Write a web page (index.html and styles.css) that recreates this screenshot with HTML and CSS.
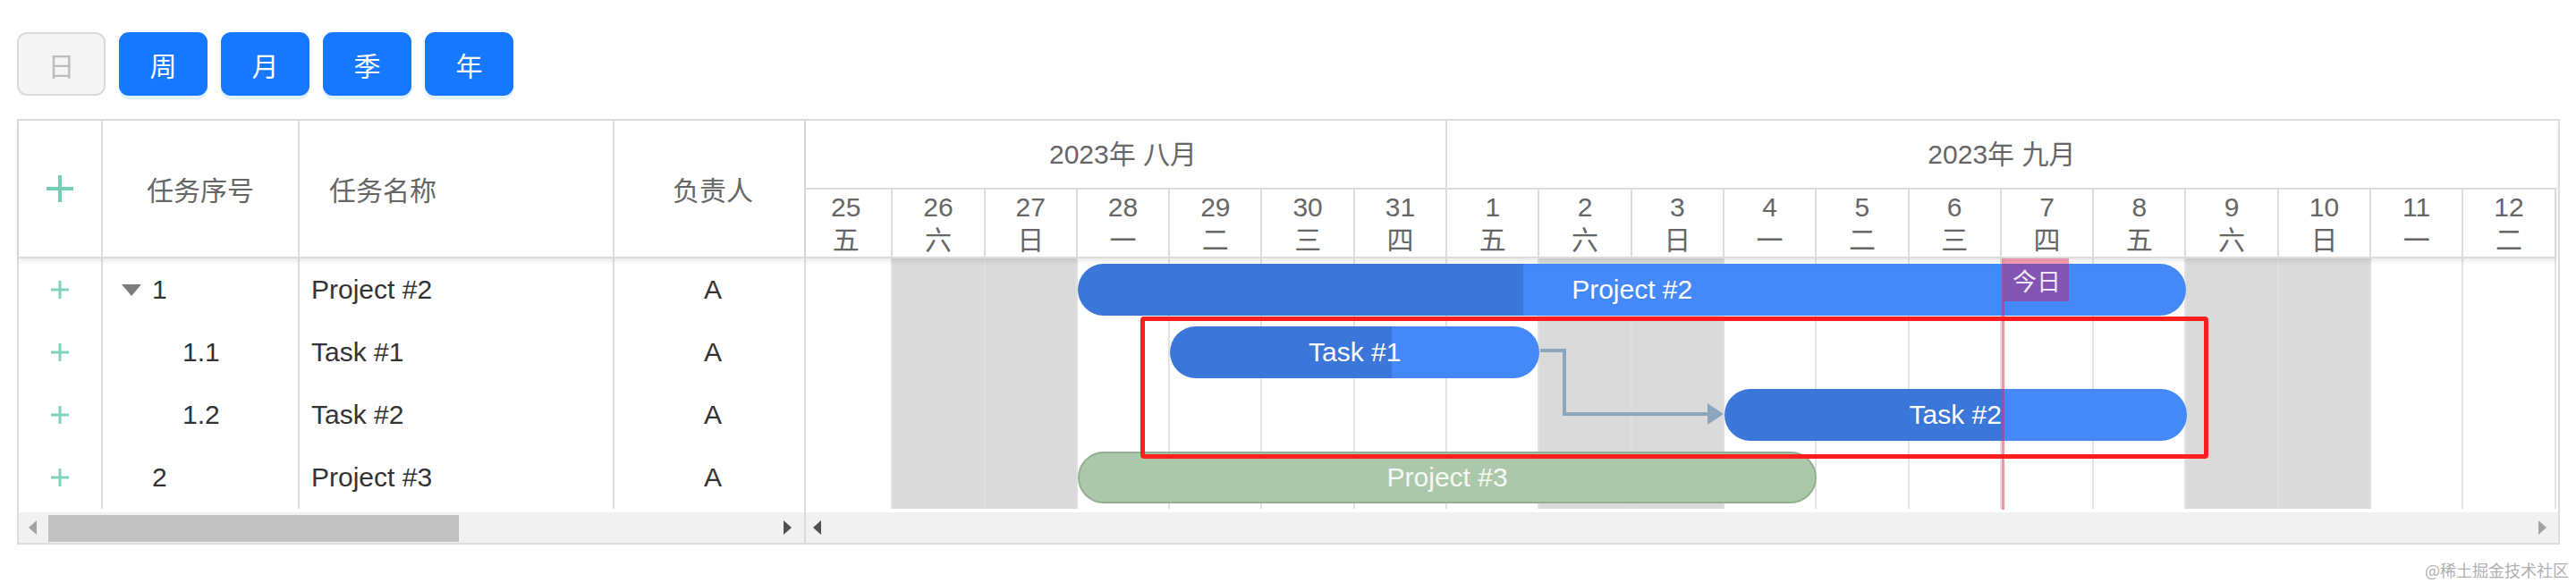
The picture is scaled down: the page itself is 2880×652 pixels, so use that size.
FILE: index.html
```html
<!DOCTYPE html>
<html lang="zh-CN">
<head>
<meta charset="utf-8">
<title>Gantt</title>
<link rel="stylesheet" href="styles.css">
</head>
<body>
<div class="toolbar">
  <button class="btn btn-disabled">日</button>
  <button class="btn btn-primary">周</button>
  <button class="btn btn-primary">月</button>
  <button class="btn btn-primary">季</button>
  <button class="btn btn-primary">年</button>
</div>

<div class="gantt">
  <div class="grid-pane">
    <div class="ghead">
      <div class="hc c0"><svg class="plus-big" width="30" height="30" viewBox="0 0 30 30"><rect x="13" y="0" width="4" height="30"/><rect x="0" y="13" width="30" height="4"/></svg></div>
      <div class="hc c1 center">任务序号</div>
      <div class="hc c2 hname">任务名称</div>
      <div class="hc c3 center">负责人</div>
    </div>
    <div class="gbody">
      <div class="row">
        <div class="bc c0"><svg class="plus" width="20" height="20" viewBox="0 0 20 20"><rect x="8.5" y="0" width="3" height="20"/><rect x="0" y="8.5" width="20" height="3"/></svg></div>
        <div class="bc c1 tree"><svg class="tri" width="22" height="13" viewBox="0 0 22 13"><polygon points="0,0 22,0 11,13"/></svg><span class="tno">1</span></div>
        <div class="bc c2 name">Project #2</div>
        <div class="bc c3 center">A</div>
      </div>
      <div class="row">
        <div class="bc c0"><svg class="plus" width="20" height="20" viewBox="0 0 20 20"><rect x="8.5" y="0" width="3" height="20"/><rect x="0" y="8.5" width="20" height="3"/></svg></div>
        <div class="bc c1 tree lvl1"><span class="tri-space"></span><span class="tno">1.1</span></div>
        <div class="bc c2 name">Task #1</div>
        <div class="bc c3 center">A</div>
      </div>
      <div class="row">
        <div class="bc c0"><svg class="plus" width="20" height="20" viewBox="0 0 20 20"><rect x="8.5" y="0" width="3" height="20"/><rect x="0" y="8.5" width="20" height="3"/></svg></div>
        <div class="bc c1 tree lvl1"><span class="tri-space"></span><span class="tno">1.2</span></div>
        <div class="bc c2 name">Task #2</div>
        <div class="bc c3 center">A</div>
      </div>
      <div class="row">
        <div class="bc c0"><svg class="plus" width="20" height="20" viewBox="0 0 20 20"><rect x="8.5" y="0" width="3" height="20"/><rect x="0" y="8.5" width="20" height="3"/></svg></div>
        <div class="bc c1 tree"><span class="tri-space"></span><span class="tno">2</span></div>
        <div class="bc c2 name">Project #3</div>
        <div class="bc c3 center">A</div>
      </div>
    </div>
    <div class="hscroll hscroll-left">
      <span class="arr arr-l light"></span>
      <span class="thumb"></span>
      <span class="fill"></span>
      <span class="arr arr-r dark"></span>
    </div>
  </div>

  <div class="chart-pane">
    <div class="timeline">
      <div class="thead">
        <div class="months">
          <div class="month m-aug">2023年 八月</div>
          <div class="month m-sep">2023年 九月</div>
        </div>
        <div class="days">
          <div class="day">25<br>五</div>
          <div class="day">26<br>六</div>
          <div class="day">27<br>日</div>
          <div class="day">28<br>一</div>
          <div class="day">29<br>二</div>
          <div class="day">30<br>三</div>
          <div class="day">31<br>四</div>
          <div class="day">1<br>五</div>
          <div class="day">2<br>六</div>
          <div class="day">3<br>日</div>
          <div class="day">4<br>一</div>
          <div class="day">5<br>二</div>
          <div class="day">6<br>三</div>
          <div class="day">7<br>四</div>
          <div class="day">8<br>五</div>
          <div class="day">9<br>六</div>
          <div class="day">10<br>日</div>
          <div class="day">11<br>一</div>
          <div class="day">12<br>二</div>
        </div>
      </div>
      <div class="canvas">
        <div class="cols">
          <div class="col"></div>
          <div class="col weekend"></div>
          <div class="col weekend"></div>
          <div class="col"></div>
          <div class="col"></div>
          <div class="col"></div>
          <div class="col"></div>
          <div class="col"></div>
          <div class="col weekend"></div>
          <div class="col weekend"></div>
          <div class="col"></div>
          <div class="col"></div>
          <div class="col"></div>
          <div class="col"></div>
          <div class="col"></div>
          <div class="col weekend"></div>
          <div class="col weekend"></div>
          <div class="col"></div>
          <div class="col"></div>
        </div>
        <svg class="links" width="1963" height="280">
          <polyline points="827,103 854,103 854,174 1016,174" fill="none" stroke="#8ca6be" stroke-width="4"/>
          <polygon points="1014,162 1032,174 1014,186" fill="#8ca6be"/>
        </svg>
        <div class="bar bar-blue" style="--s:3;--n:12;--r:0;--p:40.2%">Project #2</div>
        <div class="bar bar-blue" style="--s:4;--n:4;--r:1;--p:60%">Task #1</div>
        <div class="bar bar-blue" style="--s:10;--n:5;--r:2;--p:60%">Task #2</div>
        <div class="bar bar-green" style="--s:3;--n:8;--r:3">Project #3</div>
        <div class="today-line" style="--s:13"></div>
        <div class="today-label" style="--s:13">今日</div>
        <div class="highlight"></div>
      </div>
    </div>
    <div class="hscroll hscroll-right">
      <span class="arr arr-l dark"></span>
      <span class="fill"></span>
      <span class="arr arr-r light"></span>
    </div>
  </div>
</div>

<div class="watermark">@稀土掘金技术社区</div>
</body>
</html>
```

FILE: styles.css
```css
* { box-sizing: border-box; }

html, body {
  margin: 0;
  padding: 0;
  background: #fff;
}

body {
  width: 2880px;
  height: 652px;
  overflow: hidden;
  font-family: "Liberation Sans", "Noto Sans CJK SC", sans-serif;
  font-size: 30px;
  color: #333;
}

/* toolbar */
.toolbar {
  display: flex;
  gap: 15px;
  padding: 36px 0 0 19px;
}

.btn {
  width: 99px;
  height: 71px;
  border-radius: 11px;
  font-family: "Noto Sans CJK SC", sans-serif;
  font-size: 30px;
  padding: 0;
  line-height: 1;
  display: flex;
  align-items: center;
  justify-content: center;
}

.btn-primary {
  background: #1677ff;
  border: 2px solid #1677ff;
  color: #fff;
  box-shadow: 0 4px 0 rgba(5, 145, 255, 0.12);
}

.btn-disabled {
  background: #f5f5f5;
  border: 2px solid #d9d9d9;
  color: #bdbdbd;
}

/* gantt frame */
.gantt {
  display: flex;
  width: 2843px;
  height: 476px;
  margin: 26px 0 0 19px;
  border: 2px solid #dcdcdc;
}

.grid-pane {
  flex: none;
  width: 880px;
  border-right: 2px solid #dcdcdc;
  display: flex;
  flex-direction: column;
}

.ghead {
  position: relative;
  z-index: 3;
  display: flex;
  height: 154px;
  border-bottom: 2px solid #dcdcdc;
  box-shadow: 0 3px 6px rgba(0, 0, 0, 0.09);
  color: #666;
  font-family: "Noto Sans CJK SC", sans-serif;
  background: #fff;
}

.c0 { width: 94px; border-right: 2px solid #dcdcdc; }
.c1 { width: 220px; border-right: 2px solid #dcdcdc; }
.c2 { width: 352px; border-right: 2px solid #dcdcdc; }
.c3 { width: 212px; padding-left: 8px; }

.hc {
  flex: none;
  display: flex;
  align-items: center;
  line-height: 1;
}

.hc.c0 { justify-content: center; }
.center { justify-content: center; }
.hname { padding-left: 33px; }

.plus-big { fill: #74ceb4; }
.plus { fill: #7fd3bb; }

.gbody {
  height: 280px;
}

.row {
  display: flex;
  height: 70px;
}

.bc {
  flex: none;
  display: flex;
  align-items: center;
  height: 100%;
  white-space: nowrap;
}

.bc.c0 { justify-content: center; border-right-color: #dedede; }
.bc.c1 { border-right-color: #dedede; }
.bc.c2 { border-right-color: #dedede; }
.name { padding-left: 13px; }

.tree { padding-left: 21px; }
.tree.lvl1 { padding-left: 55px; }
.tri { fill: #7d7d7d; margin-right: 12px; flex: none; }
.tri-space { display: inline-block; width: 22px; margin-right: 12px; flex: none; }

/* scrollbars */
.hscroll {
  height: 38px;
  border-top: 4px solid #fff;
  background: #f1f1f1;
  display: flex;
  align-items: center;
}

.hscroll-left { padding: 0 14px 0 11px; }
.hscroll-right { padding: 0 13px 0 8px; }

.fill { flex: 1; }

.thumb {
  width: 459px;
  height: 30px;
  margin-left: 13px;
  margin-top: 2px;
  background: #c1c1c1;
}

.arr {
  width: 0;
  height: 0;
  border-top: 8px solid transparent;
  border-bottom: 8px solid transparent;
}
.arr-l { border-right: 9px solid #a3a3a3; }
.arr-r { border-left: 9px solid #a3a3a3; }
.arr-l.dark { border-right-color: #505050; }
.arr-r.dark { border-left-color: #505050; }

/* chart */
.chart-pane {
  flex: 1;
  min-width: 0;
  overflow: hidden;
  display: flex;
  flex-direction: column;
  --dw: 103.3px;
}

.timeline {
  width: calc(var(--dw) * 19);
  margin-left: -6px;
  flex: none;
}

.thead {
  position: relative;
  z-index: 3;
  background: #fff;
  box-shadow: 0 3px 6px rgba(0, 0, 0, 0.09);
  color: #666;
}

.months {
  display: flex;
  height: 77px;
  border-bottom: 2px solid #dcdcdc;
}

.month {
  flex: none;
  display: flex;
  align-items: center;
  justify-content: center;
  line-height: 1;
}

.m-aug { width: calc(var(--dw) * 7); border-right: 2px solid #dcdcdc; }
.m-sep { width: calc(var(--dw) * 12); }

.days {
  display: flex;
  height: 77px;
  border-bottom: 2px solid #dcdcdc;
}

.day {
  flex: none;
  width: var(--dw);
  border-right: 2px solid #dcdcdc;
  text-align: center;
  line-height: 37px;
  padding-top: 1px;
}

.canvas {
  position: relative;
  height: 280px;
}

.cols {
  display: flex;
  height: 100%;
}

.col {
  flex: none;
  width: var(--dw);
  border-right: 2px solid #e3e3e3;
}

.col.weekend {
  background: #dadada;
  border-right-color: #dfdfdf;
}

.links {
  position: absolute;
  left: 0;
  top: 0;
}

.bar {
  position: absolute;
  left: calc(var(--dw) * var(--s));
  width: calc(var(--dw) * var(--n));
  top: calc(var(--r) * 70px + 6px);
  height: 58px;
  border-radius: 29px;
  display: flex;
  align-items: center;
  justify-content: center;
  color: #fff;
  font-size: 30px;
  line-height: 1;
  white-space: nowrap;
  overflow: hidden;
}

.bar-blue {
  background: linear-gradient(to right, #3b76d9 0, #3b76d9 var(--p), #4589f9 var(--p), #4589f9 100%);
}

.bar-green {
  background: #abc9aa;
  border: 2px solid #92b091;
  color: #f6f9f6;
}

.today-line {
  position: absolute;
  left: calc(var(--dw) * var(--s));
  top: 0;
  width: 3px;
  height: 281px;
  background: rgba(235, 20, 50, 0.45);
  z-index: 2;
}

.today-label {
  position: absolute;
  left: calc(var(--dw) * var(--s) + 3px);
  top: 0;
  width: 72px;
  height: 48px;
  background: rgba(230, 0, 60, 0.38);
  color: rgba(255, 255, 255, 0.88);
  font-family: "Noto Sans CJK SC", sans-serif;
  font-size: 27px;
  line-height: 1;
  display: flex;
  align-items: center;
  justify-content: center;
  z-index: 2;
}

.highlight {
  position: absolute;
  left: 380px;
  top: 65px;
  width: 1194px;
  height: 159px;
  border: 5px solid #fa1e1e;
  border-radius: 4px;
  z-index: 4;
}

.watermark {
  text-align: right;
  padding-right: 8px;
  margin-top: 19px;
  font-family: "Noto Sans CJK SC", sans-serif;
  font-size: 18px;
  line-height: 1;
  color: #b0b0b0;
}
```
